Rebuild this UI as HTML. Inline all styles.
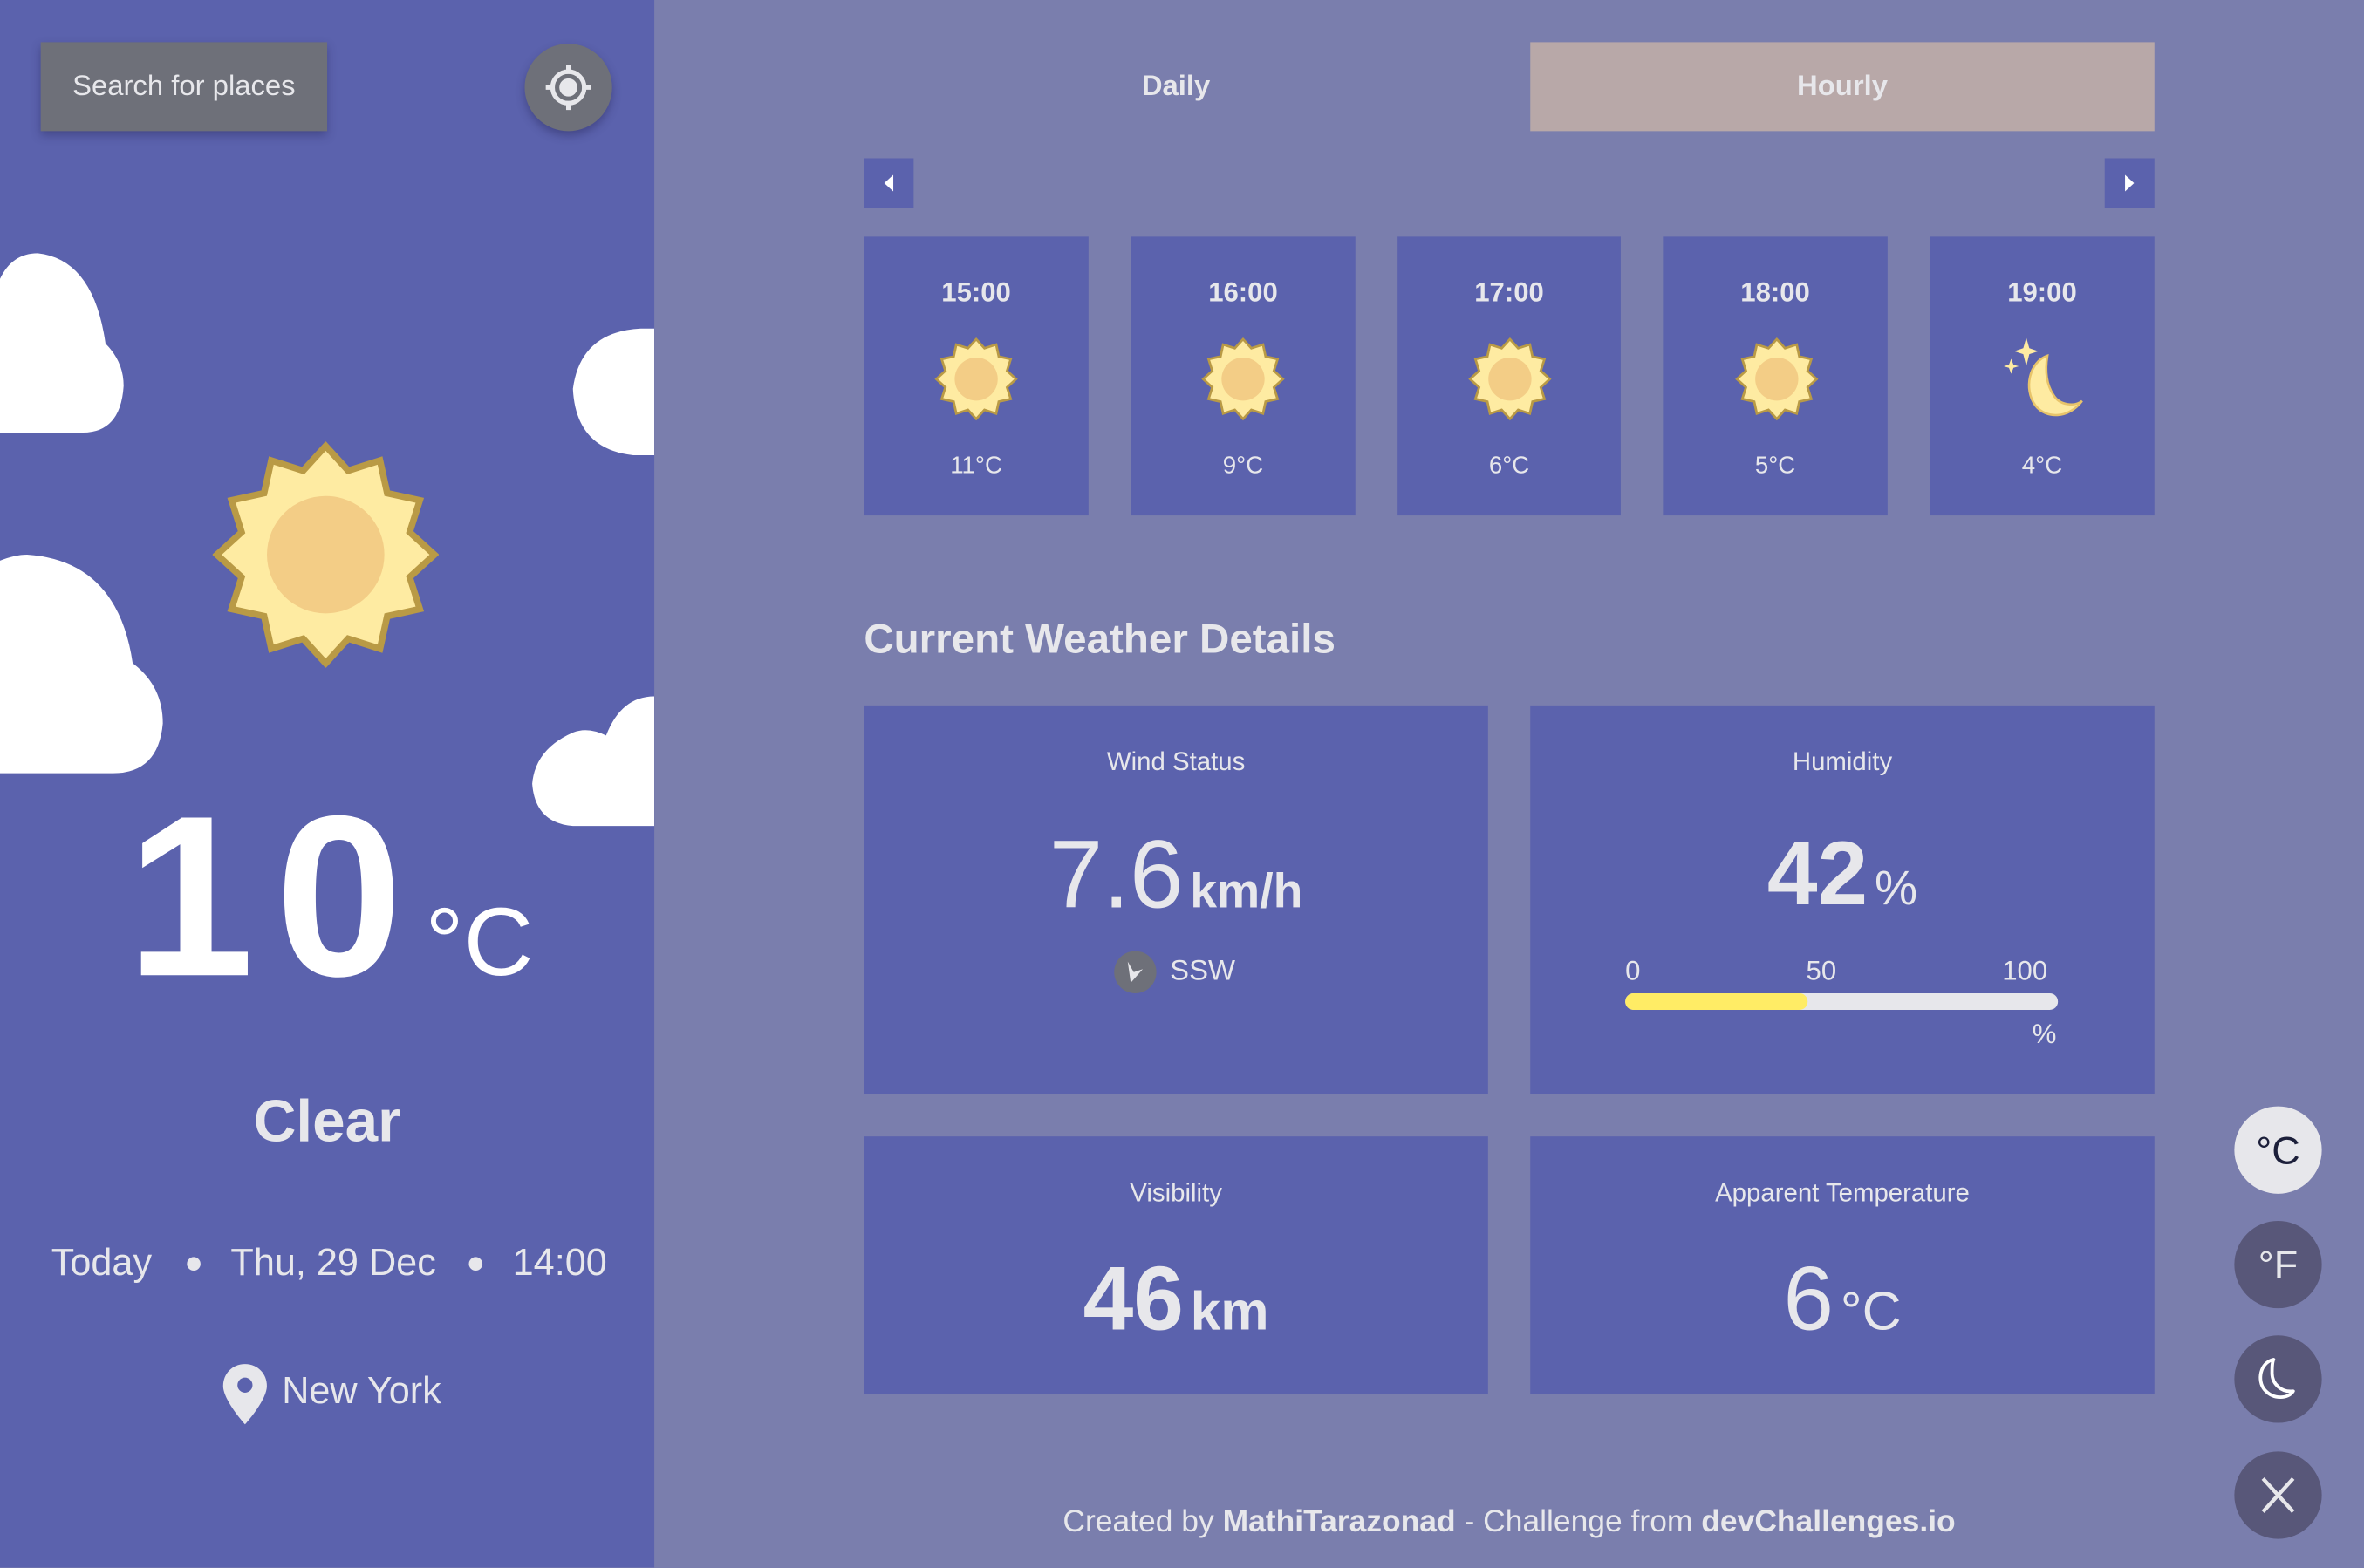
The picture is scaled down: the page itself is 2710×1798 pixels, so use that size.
<!DOCTYPE html>
<html><head><meta charset="utf-8">
<style>
html,body{margin:0;padding:0;width:2710px;height:1798px;overflow:hidden;background:#7a7ead;}
#w{position:absolute;left:0;top:0;width:1568px;height:1040px;transform:scale(1.72832);transform-origin:0 0;font-family:"Liberation Sans",sans-serif;color:#e7e7eb;}
.a{position:absolute;}
.c{position:absolute;text-align:center;white-space:nowrap;}
.card{position:absolute;background:#5b62ad;}
.circ{position:absolute;width:58px;height:58px;border-radius:50%;background:#585779;}
</style></head><body>
<svg width="0" height="0" style="position:absolute">
<defs>
<g id="sun">
<polygon points="0,-100 20.7,-77.3 50,-86.6 56.6,-56.6 86.6,-50 77.3,-20.7 100,0 77.3,20.7 86.6,50 56.6,56.6 50,86.6 20.7,77.3 0,100 -20.7,77.3 -50,86.6 -56.6,56.6 -86.6,50 -77.3,20.7 -100,0 -77.3,-20.7 -86.6,-50 -56.6,-56.6 -50,-86.6 -20.7,-77.3" fill="#feeba2" stroke="#b99a45" stroke-width="6" stroke-linejoin="miter"/>
<circle r="54" fill="#f3cd86"/>
</g>
</defs>
</svg>
<div id="w">
<div class="a" style="left:0;top:0;width:434px;height:1040px;background:#5b62ad;overflow:hidden">
  <div class="a" style="left:27px;top:28px;width:190px;height:59px;background:#6e7079;box-shadow:0 3px 6px rgba(40,40,90,.45);"></div>
  <div class="c" style="left:27px;top:28px;width:190px;line-height:59px;font-size:19px;color:#e7e7eb">Search for places</div>
  <div class="a" style="left:348px;top:29px;width:58px;height:58px;border-radius:50%;background:#6e7079;box-shadow:0 3px 6px rgba(40,40,90,.45)"></div>
  <svg class="a" style="left:358px;top:39px" width="38" height="38" viewBox="0 0 38 38"><circle cx="19" cy="19" r="10.5" fill="none" stroke="#e7e7eb" stroke-width="3"/><circle cx="19" cy="19" r="6" fill="#e7e7eb"/><path d="M19 4v6M19 28v6M4 19h6M28 19h6" stroke="#e7e7eb" stroke-width="3"/></svg>
  <svg class="a" style="left:0;top:0" width="434" height="600" viewBox="0 0 434 600">
    <g fill="#fff">
      <path d="M0 185 Q8 168 25 168 Q62 172 70 228 Q82 240 82 256 Q80 287 55 287 L0 287 Z"/>
      <path d="M0 372 Q10 368 18 368 Q78 372 88 440 Q108 455 108 480 Q105 513 75 513 L0 513 Z"/>
      <path d="M434 218 L425 218 Q385 220 380 258 Q382 298 420 302 L434 302 Z"/>
      <path d="M434 462 Q412 462 402 488 Q390 482 380 486 Q355 497 353 520 Q355 546 380 548 L434 548 Z"/>
    </g>
  </svg>
  <svg class="a" style="left:141px;top:293px" width="150" height="150" viewBox="-104 -104 208 208"><use href="#sun"/></svg>
  <div class="a" style="left:84px;top:505px;font-size:152px;font-weight:bold;color:#fff;line-height:180px;letter-spacing:14px">10</div>
  <div class="a" style="left:282px;top:585px;font-size:64px;color:#fff;line-height:80px">°C</div>
  <div class="c" style="left:0;width:434px;top:720px;font-size:39px;font-weight:bold;line-height:50px">Clear</div>
  <div class="a" style="left:34px;top:822px;font-size:25px;line-height:32px;white-space:nowrap">Today</div>
  <div class="a" style="left:124px;top:834px;width:9px;height:9px;border-radius:50%;background:#e7e7eb"></div>
  <div class="a" style="left:153px;top:822px;font-size:25px;line-height:32px;white-space:nowrap">Thu, 29 Dec</div>
  <div class="a" style="left:311px;top:834px;width:9px;height:9px;border-radius:50%;background:#e7e7eb"></div>
  <div class="a" style="left:340px;top:822px;font-size:25px;line-height:32px;white-space:nowrap">14:00</div>
  <svg class="a" style="left:147px;top:904px" width="31" height="42" viewBox="0 0 31 42"><path d="M15.5 1C7 1 1 7.5 1 15.5 1 25 15.5 41 15.5 41S30 25 30 15.5C30 7.5 24 1 15.5 1Z" fill="#e7e7eb"/><circle cx="15.5" cy="15" r="5" fill="#5b62ad"/></svg>
  <div class="a" style="left:187px;top:907px;font-size:25px;line-height:32px;white-space:nowrap">New York</div>
</div>

<div class="c" style="left:573px;width:414px;top:28px;line-height:59px;font-size:19px;font-weight:bold">Daily</div>
<div class="a" style="left:1015px;top:28px;width:414px;height:59px;background:#b8a8a8"></div>
<div class="c" style="left:1015px;width:414px;top:28px;line-height:59px;font-size:19px;font-weight:bold">Hourly</div>
<div class="card" style="left:573px;top:105px;width:33px;height:33px"></div>
<svg class="a" style="left:573px;top:105px" width="33" height="33"><polygon points="19.5,11 19.5,22 13.5,16.5" fill="#fff"/></svg>
<div class="card" style="left:1396px;top:105px;width:33px;height:33px"></div>
<svg class="a" style="left:1396px;top:105px" width="33" height="33"><polygon points="13.5,11 13.5,22 19.5,16.5" fill="#fff"/></svg>

<div class="card" style="left:573px;top:157px;width:149px;height:185px"></div>
<div class="card" style="left:750px;top:157px;width:149px;height:185px"></div>
<div class="card" style="left:927px;top:157px;width:148px;height:185px"></div>
<div class="card" style="left:1103px;top:157px;width:149px;height:185px"></div>
<div class="card" style="left:1280px;top:157px;width:149px;height:185px"></div>
<div class="c" style="left:573px;width:149px;top:182px;font-size:18px;font-weight:bold;line-height:24px">15:00</div>
<div class="c" style="left:750px;width:149px;top:182px;font-size:18px;font-weight:bold;line-height:24px">16:00</div>
<div class="c" style="left:927px;width:148px;top:182px;font-size:18px;font-weight:bold;line-height:24px">17:00</div>
<div class="c" style="left:1103px;width:149px;top:182px;font-size:18px;font-weight:bold;line-height:24px">18:00</div>
<div class="c" style="left:1280px;width:149px;top:182px;font-size:18px;font-weight:bold;line-height:24px">19:00</div>
<svg class="a" style="left:620px;top:224px" width="55" height="55" viewBox="-104 -104 208 208"><use href="#sun"/></svg>
<svg class="a" style="left:797px;top:224px" width="55" height="55" viewBox="-104 -104 208 208"><use href="#sun"/></svg>
<svg class="a" style="left:974px;top:224px" width="55" height="55" viewBox="-104 -104 208 208"><use href="#sun"/></svg>
<svg class="a" style="left:1151px;top:224px" width="55" height="55" viewBox="-104 -104 208 208"><use href="#sun"/></svg>
<svg class="a" style="left:1326px;top:222px" width="60" height="60" viewBox="0 0 60 60">
  <path d="M32 14 C20 18 16 36 24 47 C31 56 46 56 55 44 C50 48 40 47 36 40 C30 31 31 20 32 14Z" fill="#feeba2" stroke="#e8c46a" stroke-width="1.5"/>
  <path d="M18 2 L20 9 L26 11 L20 13 L18 21 L16 13 L10 11 L16 9Z" fill="#feeba2"/>
  <path d="M8 16 L9.5 20 L13 21 L9.5 22 L8 26 L6.5 22 L3 21 L6.5 20Z" fill="#feeba2"/>
</svg>
<div class="c" style="left:573px;width:149px;top:300px;font-size:16px;line-height:20px">11°C</div>
<div class="c" style="left:750px;width:149px;top:300px;font-size:16px;line-height:20px">9°C</div>
<div class="c" style="left:927px;width:148px;top:300px;font-size:16px;line-height:20px">6°C</div>
<div class="c" style="left:1103px;width:149px;top:300px;font-size:16px;line-height:20px">5°C</div>
<div class="c" style="left:1280px;width:149px;top:300px;font-size:16px;line-height:20px">4°C</div>

<div class="a" style="left:573px;top:406px;font-size:27.5px;font-weight:bold;line-height:36px;white-space:nowrap">Current Weather Details</div>

<div class="card" style="left:573px;top:468px;width:414px;height:258px"></div>
<div class="card" style="left:1015px;top:468px;width:414px;height:258px"></div>
<div class="card" style="left:573px;top:754px;width:414px;height:171px"></div>
<div class="card" style="left:1015px;top:754px;width:414px;height:171px"></div>

<div class="c" style="left:573px;width:414px;top:495px;font-size:17px;line-height:22px">Wind Status</div>
<div class="c" style="left:573px;width:414px;top:540px;line-height:80px"><span style="font-size:64px;">7.6</span> <span style="font-size:32px;font-weight:bold">km/h</span></div>
<svg class="a" style="left:738px;top:630px" width="30" height="30" viewBox="0 0 30 30"><circle cx="15" cy="15" r="14" fill="#6e7079"/><path d="M10 8 L12 22 L20 13 L14 15Z" fill="#e7e7eb"/></svg>
<div class="a" style="left:776px;top:633px;font-size:19px;line-height:24px">SSW</div>

<div class="c" style="left:1015px;width:414px;top:540px;line-height:80px"><span style="font-size:60px;font-weight:bold">42</span> <span style="font-size:32px">%</span></div>
<div class="c" style="left:1015px;width:414px;top:495px;font-size:17px;line-height:22px">Humidity</div>
<div class="a" style="left:1078px;top:633px;font-size:18px;line-height:22px">0</div>
<div class="a" style="left:1198px;top:633px;font-size:18px;line-height:22px">50</div>
<div class="a" style="left:1328px;top:633px;font-size:18px;line-height:22px">100</div>
<div class="a" style="left:1078px;top:659px;width:287px;height:11px;border-radius:6px;background:#e7e7eb"></div>
<div class="a" style="left:1078px;top:659px;width:121px;height:11px;border-radius:6px;background:#ffec65"></div>
<div class="a" style="left:1348px;top:675px;font-size:18px;line-height:22px">%</div>

<div class="c" style="left:573px;width:414px;top:781px;font-size:17px;line-height:22px">Visibility</div>
<div class="c" style="left:573px;width:414px;top:822px;line-height:80px"><span style="font-size:60px;font-weight:bold">46</span> <span style="font-size:36px;font-weight:bold">km</span></div>
<div class="c" style="left:1015px;width:414px;top:781px;font-size:17px;line-height:22px">Apparent Temperature</div>
<div class="c" style="left:1015px;width:414px;top:822px;line-height:80px"><span style="font-size:60px">6</span> <span style="font-size:36px">°C</span></div>

<div class="circ" style="left:1482px;top:734px;background:#e7e7eb"></div>
<div class="c" style="left:1482px;top:734px;width:58px;line-height:58px;font-size:26px;color:#1c1f3a">°C</div>
<div class="circ" style="left:1482px;top:810px"></div>
<div class="c" style="left:1482px;top:810px;width:58px;line-height:58px;font-size:26px">°F</div>
<div class="circ" style="left:1482px;top:886px"></div>
<svg class="a" style="left:1482px;top:886px" width="58" height="58" viewBox="0 0 58 58"><path d="M26 16 C17 18 15 30 20 36 C26 43 36 42 39 37 C31 38 25 32 25 25 C25 21 25 18 26 16Z" fill="none" stroke="#fff" stroke-width="2.2" stroke-linejoin="round"/></svg>
<div class="circ" style="left:1482px;top:963px"></div>
<svg class="a" style="left:1482px;top:963px" width="58" height="58" viewBox="0 0 58 58"><path d="M19 18 L39 40 M39 18 L19 40" stroke="#e7e7eb" stroke-width="2.5"/></svg>

<div class="c" style="left:573px;width:856px;top:997px;font-size:20.5px;line-height:26px">Created by <b>MathiTarazonad</b> - Challenge from <b>devChallenges.io</b></div>
</div>
</body></html>
